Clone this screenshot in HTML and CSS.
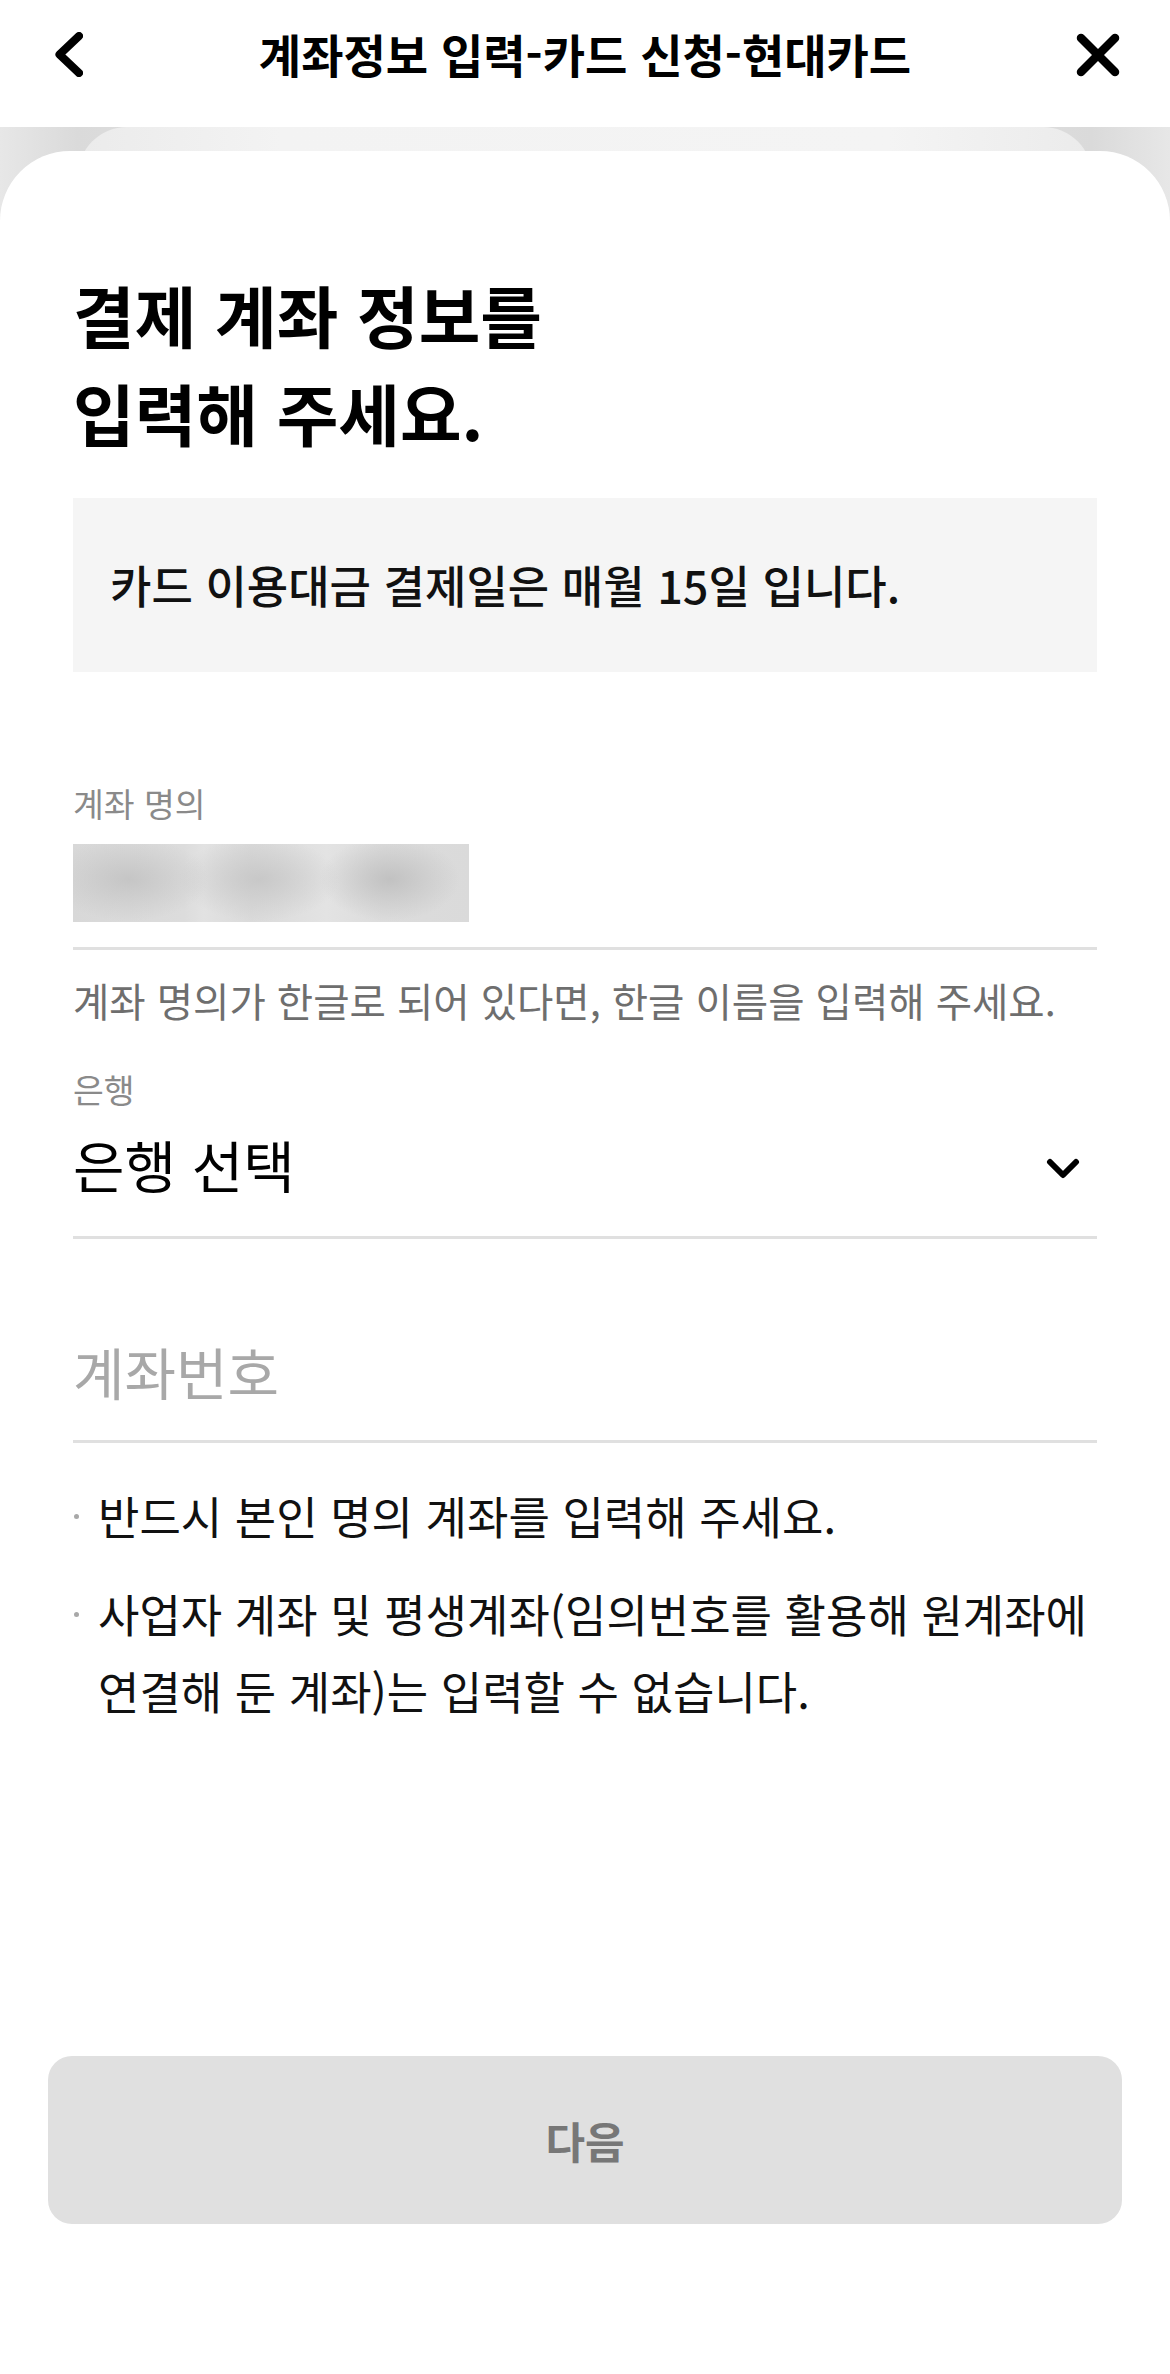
FILE: index.html
```html
<!DOCTYPE html>
<html lang="ko">
<head>
<meta charset="utf-8">
<title>계좌정보 입력-카드 신청-현대카드</title>
<link rel="stylesheet" href="styles.css">
</head>
<body>
<div class="app">
  <header class="topbar">
    <button class="icon-btn back" aria-label="뒤로">
      <svg viewBox="0 0 28 45" width="28" height="45"><polyline points="24,4 4.5,22.5 24,41"/></svg>
    </button>
    <h1 class="title">계좌정보 입력-카드 신청-현대카드</h1>
    <button class="icon-btn close" aria-label="닫기">
      <svg viewBox="0 0 44 44" width="44" height="44"><line x1="5" y1="5" x2="39" y2="39"/><line x1="39" y1="5" x2="5" y2="39"/></svg>
    </button>
  </header>
  <div class="stage">
    <main class="sheet">
      <div class="content">
        <h2 class="heading">결제 계좌 정보를<br>입력해 주세요.</h2>
        <div class="notice">카드 이용대금 결제일은 매월 15일 입니다.</div>

        <div class="field name-field">
          <div class="label">계좌 명의</div>
          <div class="blurred"></div>
        </div>
        <p class="helper">계좌 명의가 한글로 되어 있다면, 한글 이름을 입력해 주세요.</p>

        <div class="field bank-field">
          <div class="label">은행</div>
          <div class="select-row">
            <span class="select-text">은행 선택</span>
            <svg class="chev" viewBox="0 0 34 22" width="34" height="22"><polyline points="4,4 17,17 30,4"/></svg>
          </div>
        </div>

        <div class="field account-field">
          <span class="placeholder">계좌번호</span>
        </div>

        <ul class="notes">
          <li>반드시 본인 명의 계좌를 입력해 주세요.</li>
          <li>사업자 계좌 및 평생계좌(임의번호를 활용해 원계좌에<br>연결해 둔 계좌)는 입력할 수 없습니다.</li>
        </ul>
      </div>
      <div class="footer">
        <button class="next" disabled>다음</button>
      </div>
    </main>
  </div>
</div>
</body>
</html>
```

FILE: styles.css
```css
* { box-sizing: border-box; }

html, body {
  margin: 0;
  padding: 0;
  background: #ffffff;
}

body {
  font-family: "Noto Sans CJK KR", "Noto Sans", sans-serif;
  color: #111111;
}

.app {
  width: 1170px;
  height: 2374px;
  display: flex;
  flex-direction: column;
  overflow: hidden;
}

/* ---------- top bar ---------- */
.topbar {
  height: 127px;
  flex: 0 0 127px;
  display: grid;
  grid-template-columns: 1fr auto 1fr;
  align-items: center;
  padding-bottom: 18px;
  background: #ffffff;
}

.icon-btn {
  border: 0;
  background: none;
  padding: 0;
  display: flex;
}

.icon-btn svg {
  display: block;
  fill: none;
  stroke: #000000;
  stroke-linecap: round;
  stroke-linejoin: round;
}

.back { justify-self: start; margin-left: 55px; }
.back svg { stroke-width: 8; }

.close { justify-self: end; margin-right: 50px; }
.close svg { stroke-width: 8.5; }

.title {
  margin: 0;
  padding-bottom: 4px;
  font-size: 46px;
  line-height: 56px;
  font-weight: 700;
  color: #000000;
  white-space: nowrap;
}

/* ---------- stage & sheet ---------- */
.stage {
  flex: 1;
  display: flex;
  flex-direction: column;
  padding-top: 24px;
  position: relative;
  background: linear-gradient(to right, #e7e7e7 0, #dadada 78px, #eeeeee 50%, #dadada calc(100% - 78px), #e7e7e7 100%);
}

.stage::before {
  content: "";
  position: absolute;
  top: 0;
  left: 78px;
  right: 78px;
  height: 80px;
  border-radius: 49px 49px 0 0;
  background: linear-gradient(to right, #ebebeb, #f3f3f3 20%, #f4f4f4 80%, #ebebeb);
}

.sheet {
  flex: 1;
  position: relative;
  display: flex;
  flex-direction: column;
  background: #ffffff;
  border-radius: 70px 70px 0 0;
}

.content {
  padding: 114px 73px 0;
}

.heading {
  margin: 0;
  font-size: 67px;
  line-height: 98px;
  font-weight: 700;
  color: #000000;
}

.notice {
  margin-top: 37px;
  height: 174px;
  padding-left: 37px;
  display: flex;
  align-items: center;
  background: #f5f5f5;
  font-size: 45px;
  line-height: 56px;
  font-weight: 500;
  color: #111111;
}

.label {
  font-size: 33.5px;
  line-height: 40px;
  color: #8a8a8a;
}

.name-field {
  margin-top: 111px;
  padding-bottom: 25px;
  border-bottom: 3px solid #e0e0e0;
}

.blurred {
  margin-top: 21px;
  width: 396px;
  height: 78px;
  background:
    radial-gradient(ellipse 80px 42px at 14% 45%, rgba(195,195,195,0.9), rgba(195,195,195,0) 100%),
    radial-gradient(ellipse 80px 42px at 47% 45%, rgba(198,198,198,0.9), rgba(198,198,198,0) 100%),
    radial-gradient(ellipse 70px 42px at 80% 45%, rgba(192,192,192,0.95), rgba(192,192,192,0) 100%),
    linear-gradient(to right, #d8d8d8 0%, #dcdcdc 28%, #e2e2e2 33%, #dadada 45%, #e3e3e3 64%, #dcdcdc 78%, #dadada 100%);
}

.helper {
  margin: 26px 0 0;
  font-size: 39.5px;
  line-height: 48px;
  color: #6e6e6e;
  white-space: nowrap;
}

.bank-field {
  margin-top: 45px;
}

.select-row {
  margin-top: 14px;
  height: 116px;
  padding-bottom: 32px;
  display: flex;
  align-items: center;
  justify-content: space-between;
  border-bottom: 3px solid #e0e0e0;
}

.select-text {
  font-size: 56px;
  line-height: 80px;
  color: #000000;
}

.chev {
  margin-top: 10px;
  margin-right: 17px;
  fill: none;
  stroke: #000000;
  stroke-width: 6;
  stroke-linecap: round;
  stroke-linejoin: round;
}

.account-field {
  margin-top: 92px;
  padding-bottom: 29px;
  border-bottom: 3px solid #e0e0e0;
}

.placeholder {
  display: block;
  font-size: 56px;
  line-height: 80px;
  color: #a8a8a8;
}

.notes {
  margin: 34px 0 0;
  padding: 0;
  list-style: none;
}

.notes li {
  position: relative;
  padding-left: 25px;
  font-size: 45px;
  line-height: 77px;
  color: #111111;
  white-space: nowrap;
}

.notes li + li {
  margin-top: 21px;
}

.notes li::before {
  content: "";
  position: absolute;
  left: 1px;
  top: 37px;
  width: 5px;
  height: 5px;
  border-radius: 50%;
  background: #a8a8a8;
}

/* ---------- footer ---------- */
.footer {
  margin-top: auto;
  padding: 0 48px 150px;
}

.next {
  display: block;
  width: 100%;
  height: 168px;
  border: 0;
  border-radius: 24px;
  background: #e0e0e0;
  font-family: inherit;
  font-size: 43px;
  font-weight: 700;
  color: #777777;
}
```
